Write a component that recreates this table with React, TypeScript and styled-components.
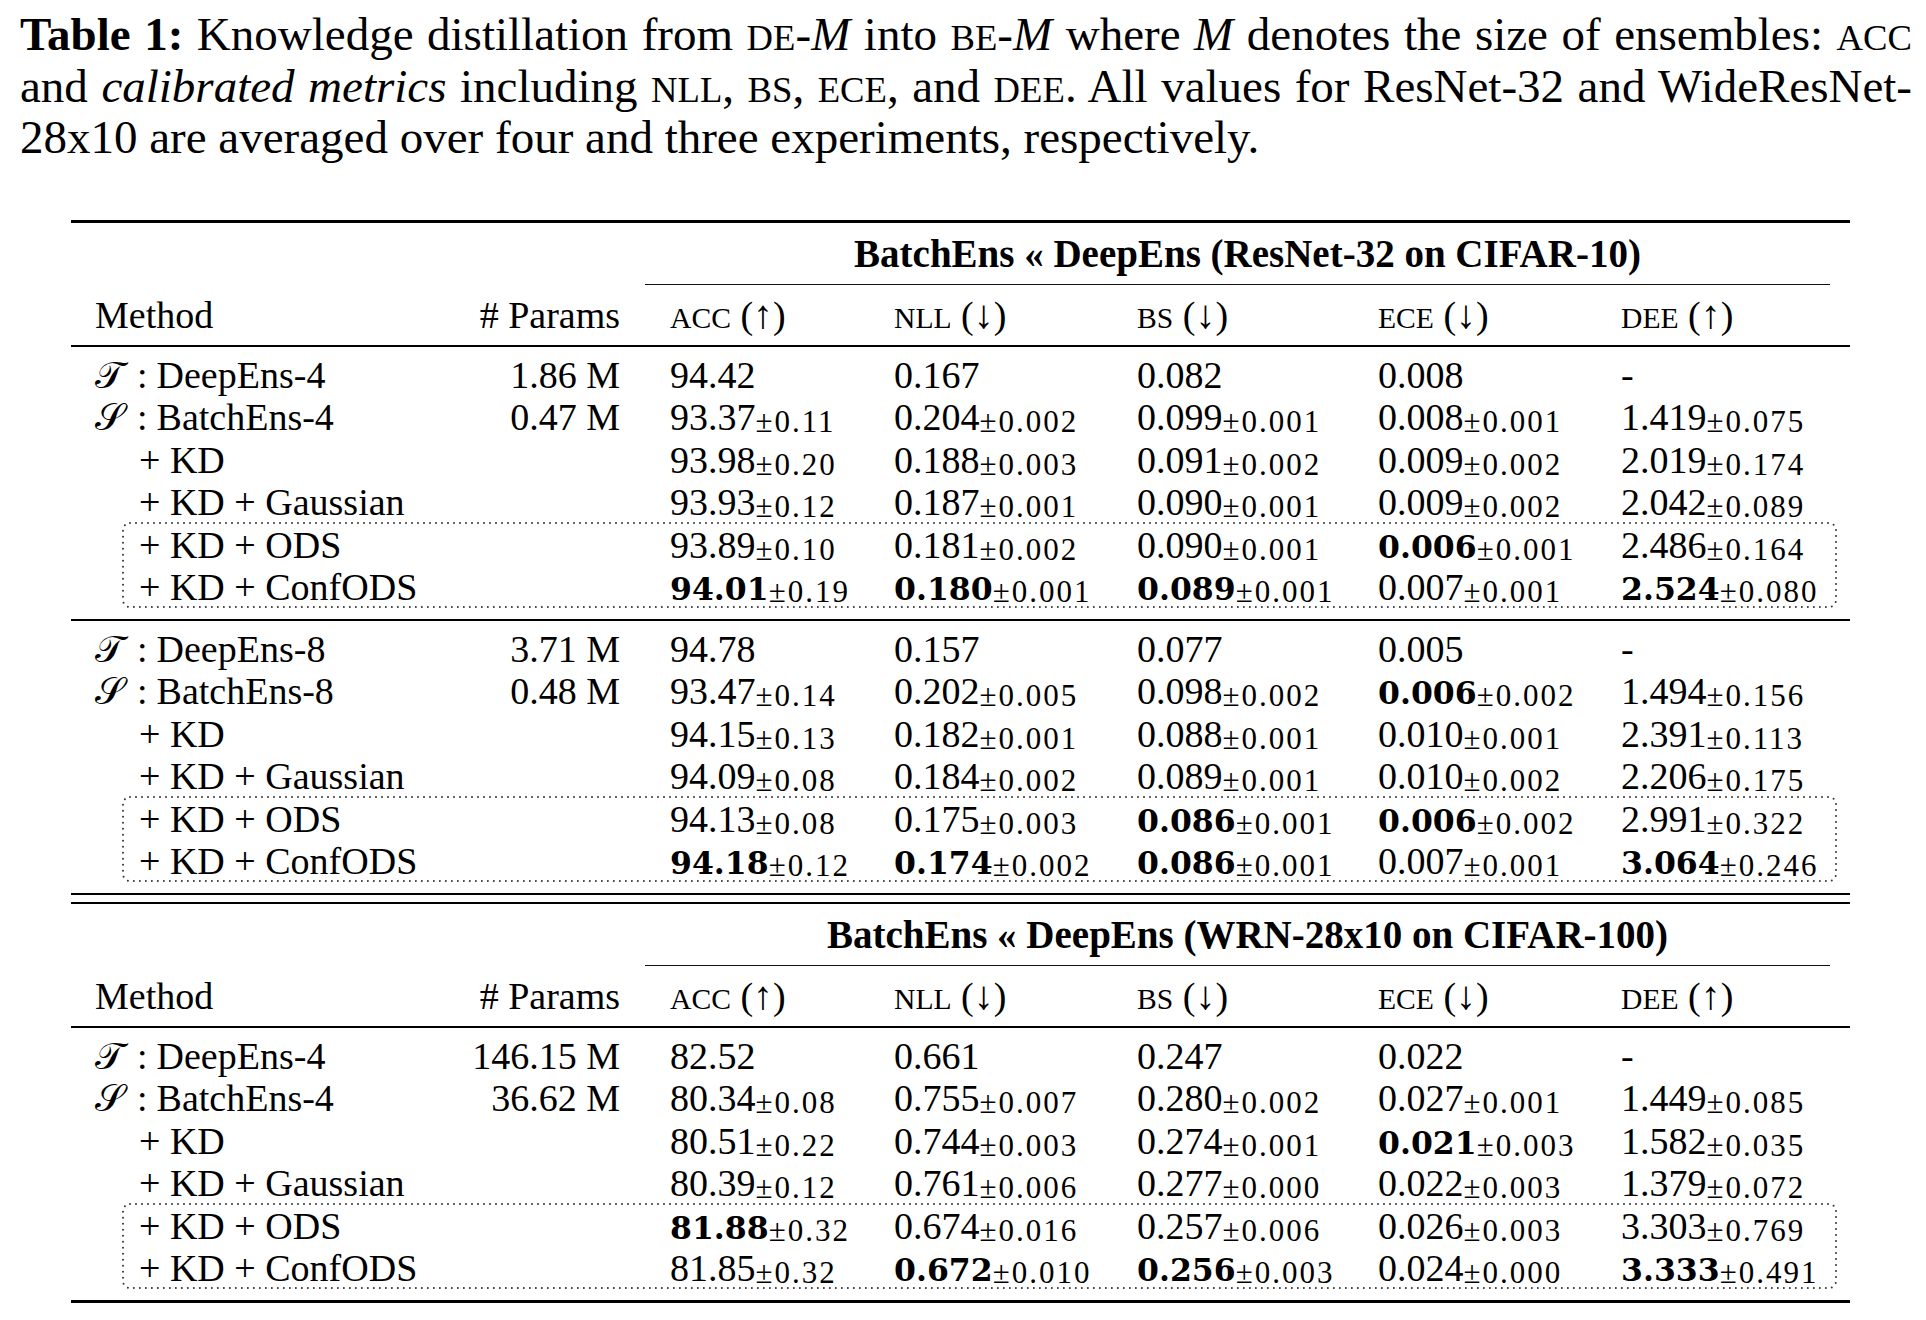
import React from "react";
import styled, { createGlobalStyle, css } from "styled-components";

const GlobalStyle = createGlobalStyle`
  html, body { margin: 0; padding: 0; background: #ffffff; }
  body { font-family: "Liberation Serif", "Times New Roman", serif; color: #000; }
`;

const Page = styled.main`
  box-sizing: border-box;
  width: 1926px;
  min-height: 1320px;
  padding: 9px 15px 0 20px;
`;

const Caption = styled.div`
  width: 1892px;
  font-size: 47px;
  line-height: 51.6px;
`;

const CaptionLine = styled.div<{ $justify?: boolean }>`
  height: 51.6px;
  white-space: nowrap;
  text-align: ${(p) => (p.$justify ? "justify" : "left")};
  text-align-last: ${(p) => (p.$justify ? "justify" : "auto")};
`;

const Label = styled.b`
  font-weight: bold;
`;

const Sc = styled.span`
  font-size: 0.78em;
  line-height: 1;
`;

const It = styled.i`
  font-style: italic;
  line-height: 1;
`;

const Table = styled.section`
  width: 1779px;
  margin: 56px 0 0 51px;
  font-size: 38px;
`;

const Rule = styled.div<{ $h: number }>`
  height: ${(p) => p.$h}px;
  background: #000;
`;

const DoubleRule = styled.div`
  height: 7px;
  border-top: 2px solid #000;
  border-bottom: 2px solid #000;
`;

const TitleRow = styled.div`
  height: 61px;
  line-height: 61px;
  padding: 0 20px 0 594px;
  text-align: center;
  font-size: 39px;
  font-weight: bold;
  white-space: nowrap;
`;

const CmidRule = styled.div`
  height: 1px;
  margin: 0 20px 0 574px;
  background: #111;
`;

const Grid = styled.div`
  display: grid;
  grid-template-columns: 350px 225px 224px 243px 241px 243px 1fr;
  padding-left: 24px;
  white-space: nowrap;
`;

const HeaderRow = styled(Grid)`
  height: 60px;
  line-height: 60px;
`;

const DataRow = styled(Grid)`
  height: 42.5px;
  line-height: 42.5px;
`;

const ParamsCell = styled.div`
  text-align: right;
  padding-right: 50px;
`;

const MethodCell = styled.div<{ $indent?: boolean }>`
  padding-left: ${(p) => (p.$indent ? "44px" : "0")};
`;

const Script = styled.span`
  font-family: "DejaVu Serif", "DejaVu Sans", "Noto Sans", serif;
  line-height: 1;
`;

const Colon = styled.span`
  margin: 0 9px 0 13px;
`;

const Value = styled.span<{ $bold?: boolean }>`
  ${(p) =>
    p.$bold &&
    css`
      font-family: "DejaVu Serif", serif;
      font-weight: bold;
      font-size: 31.5px;
      line-height: 1;
    `}
`;

const Pm = styled.span`
  font-size: 31px;
  letter-spacing: 2px;
  line-height: 1;
  vertical-align: -2px;
`;

const Arrow = styled.span`
  font-size: 40px;
  line-height: 1;
`;

const Body = styled.div`
  padding: 7px 0 10px;
`;

const Highlight = styled.div`
  position: relative;
`;

const Frame = styled.svg`
  position: absolute;
  left: 52px;
  top: -1px;
  width: calc(100% - 66px);
  height: calc(100% - 1px);
  overflow: visible;
  pointer-events: none;
`;

type Metric = { v: string; pm?: string; b?: boolean };
type RowData = { kind: "T" | "S" | "plus"; name: string; params?: string; m: Metric[] };
type SectionData = { title: string; groups: RowData[][] };

const mt = (s: string): Metric => {
  const bold = s.startsWith("*");
  const clean = bold ? s.slice(1) : s;
  const [v, pm] = clean.split("|");
  return { v, pm, b: bold };
};

const row = (kind: RowData["kind"], name: string, params: string | undefined, vals: string[]): RowData => ({
  kind,
  name,
  params,
  m: vals.map(mt),
});

const sections: SectionData[] = [
  {
    title: "BatchEns « DeepEns (ResNet-32 on CIFAR-10)",
    groups: [
      [
        row("T", "DeepEns-4", "1.86 M", ["94.42", "0.167", "0.082", "0.008", "-"]),
        row("S", "BatchEns-4", "0.47 M", ["93.37|0.11", "0.204|0.002", "0.099|0.001", "0.008|0.001", "1.419|0.075"]),
        row("plus", "+ KD", undefined, ["93.98|0.20", "0.188|0.003", "0.091|0.002", "0.009|0.002", "2.019|0.174"]),
        row("plus", "+ KD + Gaussian", undefined, ["93.93|0.12", "0.187|0.001", "0.090|0.001", "0.009|0.002", "2.042|0.089"]),
        row("plus", "+ KD + ODS", undefined, ["93.89|0.10", "0.181|0.002", "0.090|0.001", "*0.006|0.001", "2.486|0.164"]),
        row("plus", "+ KD + ConfODS", undefined, ["*94.01|0.19", "*0.180|0.001", "*0.089|0.001", "0.007|0.001", "*2.524|0.080"]),
      ],
      [
        row("T", "DeepEns-8", "3.71 M", ["94.78", "0.157", "0.077", "0.005", "-"]),
        row("S", "BatchEns-8", "0.48 M", ["93.47|0.14", "0.202|0.005", "0.098|0.002", "*0.006|0.002", "1.494|0.156"]),
        row("plus", "+ KD", undefined, ["94.15|0.13", "0.182|0.001", "0.088|0.001", "0.010|0.001", "2.391|0.113"]),
        row("plus", "+ KD + Gaussian", undefined, ["94.09|0.08", "0.184|0.002", "0.089|0.001", "0.010|0.002", "2.206|0.175"]),
        row("plus", "+ KD + ODS", undefined, ["94.13|0.08", "0.175|0.003", "*0.086|0.001", "*0.006|0.002", "2.991|0.322"]),
        row("plus", "+ KD + ConfODS", undefined, ["*94.18|0.12", "*0.174|0.002", "*0.086|0.001", "0.007|0.001", "*3.064|0.246"]),
      ],
    ],
  },
  {
    title: "BatchEns « DeepEns (WRN-28x10 on CIFAR-100)",
    groups: [
      [
        row("T", "DeepEns-4", "146.15 M", ["82.52", "0.661", "0.247", "0.022", "-"]),
        row("S", "BatchEns-4", "36.62 M", ["80.34|0.08", "0.755|0.007", "0.280|0.002", "0.027|0.001", "1.449|0.085"]),
        row("plus", "+ KD", undefined, ["80.51|0.22", "0.744|0.003", "0.274|0.001", "*0.021|0.003", "1.582|0.035"]),
        row("plus", "+ KD + Gaussian", undefined, ["80.39|0.12", "0.761|0.006", "0.277|0.000", "0.022|0.003", "1.379|0.072"]),
        row("plus", "+ KD + ODS", undefined, ["*81.88|0.32", "0.674|0.016", "0.257|0.006", "0.026|0.003", "3.303|0.769"]),
        row("plus", "+ KD + ConfODS", undefined, ["81.85|0.32", "*0.672|0.010", "*0.256|0.003", "0.024|0.000", "*3.333|0.491"]),
      ],
    ],
  },
];

const metrics: { name: string; up: boolean }[] = [
  { name: "ACC", up: true },
  { name: "NLL", up: false },
  { name: "BS", up: false },
  { name: "ECE", up: false },
  { name: "DEE", up: true },
];

function MethodLabel({ r }: { r: RowData }) {
  if (r.kind === "plus") return <MethodCell $indent>{r.name}</MethodCell>;
  return (
    <MethodCell>
      <Script>{r.kind === "T" ? "𝒯" : "𝒮"}</Script>
      <Colon>:</Colon>
      {r.name}
    </MethodCell>
  );
}

function TableRow({ r }: { r: RowData }) {
  return (
    <DataRow>
      <MethodLabel r={r} />
      <ParamsCell>{r.params ?? ""}</ParamsCell>
      {r.m.map((c, i) => (
        <div key={i}>
          <Value $bold={c.b}>{c.v}</Value>
          {c.pm && <Pm>±{c.pm}</Pm>}
        </div>
      ))}
    </DataRow>
  );
}

function GroupBody({ rows }: { rows: RowData[] }) {
  return (
    <Body>
      {rows.slice(0, 4).map((r, i) => (
        <TableRow key={i} r={r} />
      ))}
      <Highlight>
        <Frame aria-hidden>
          <rect
            x="0"
            y="0"
            width="100%"
            height="100%"
            rx="7"
            fill="none"
            stroke="#333"
            strokeWidth="2"
            strokeLinecap="round"
            strokeDasharray="0 6"
          />
        </Frame>
        {rows.slice(4).map((r, i) => (
          <TableRow key={i} r={r} />
        ))}
      </Highlight>
    </Body>
  );
}

function SectionHead({ title }: { title: string }) {
  return (
    <>
      <TitleRow>{title}</TitleRow>
      <CmidRule />
      <HeaderRow>
        <div>Method</div>
        <ParamsCell># Params</ParamsCell>
        {metrics.map((m) => (
          <div key={m.name}>
            <Sc>{m.name}</Sc> (<Arrow>{m.up ? "↑" : "↓"}</Arrow>)
          </div>
        ))}
      </HeaderRow>
      <Rule $h={2} />
    </>
  );
}

export default function App() {
  return (
    <>
      <GlobalStyle />
      <Page>
        <Caption>
          <CaptionLine $justify>
            <Label>Table 1:</Label> Knowledge distillation from <Sc>DE</Sc>-<It>M</It> into <Sc>BE</Sc>-<It>M</It> where{" "}
            <It>M</It> denotes the size of ensembles: <Sc>ACC</Sc>
          </CaptionLine>
          <CaptionLine $justify>
            and <It>calibrated metrics</It> including <Sc>NLL</Sc>, <Sc>BS</Sc>, <Sc>ECE</Sc>, and <Sc>DEE</Sc>. All values for
            ResNet-32 and WideResNet-
          </CaptionLine>
          <CaptionLine>28x10 are averaged over four and three experiments, respectively.</CaptionLine>
        </Caption>
        <Table>
          <Rule $h={3} />
          <SectionHead title={sections[0].title} />
          <GroupBody rows={sections[0].groups[0]} />
          <Rule $h={2} />
          <GroupBody rows={sections[0].groups[1]} />
          <DoubleRule />
          <SectionHead title={sections[1].title} />
          <GroupBody rows={sections[1].groups[0]} />
          <Rule $h={3} />
        </Table>
      </Page>
    </>
  );
}
